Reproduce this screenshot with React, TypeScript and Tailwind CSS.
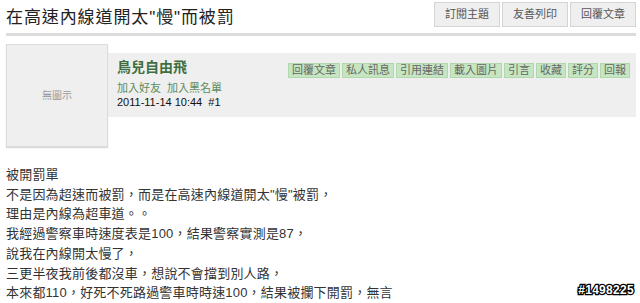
const FONT = { fontFamily: '"Liberation Sans", "Noto Sans CJK TC", sans-serif' };

const TOP_BTNS = ["訂閱主題", "友善列印", "回覆文章"];
const ACTIONS = ["回覆文章", "私人訊息", "引用連結", "載入圖片", "引言", "收藏", "評分", "回報"];

const LINES = [
  "被開罰單",
  "不是因為超速而被罰，而是在高速內線道開太\"慢\"被罰，",
  "理由是內線為超車道。。",
  "我經過警察車時速度表是100，結果警察實測是87，",
  "說我在內線開太慢了，",
  "三更半夜我前後都沒車，想說不會擋到別人路，",
  "本來都110，好死不死路過警車時時速100，結果被攔下開罰，無言",
];

export default function App() {
  return (
    <div className="relative w-[640px] h-[303px] overflow-hidden bg-white" style={FONT}>
      {/* header */}
      <div className="mx-[6px] mr-[4px] flex items-start justify-between border-b-[3px] border-[#dcdcdc] h-[36px]">
        <h1 className="pt-[9px] text-[17px] leading-[18px] tracking-[0.9px] text-[#222]">在高速內線道開太"慢"而被罰</h1>
        <div className="flex gap-[2px] pt-[2px]">
          {TOP_BTNS.map((b) => (
            <div key={b} className="h-[25px] px-[10px] flex items-center border border-[#d4d4d4] bg-[#efefef] text-[11px] text-[#555]">
              {b}
            </div>
          ))}
        </div>
      </div>

      {/* post head */}
      <div className="flex pl-[6px] pr-[4px] pt-[8px]">
        <div className="w-[102px] h-[103px] shrink-0 flex items-center justify-center bg-[#efefef] border border-[#dcdcdc] shadow-[0_1px_1px_rgba(0,0,0,0.15)] text-[10px] text-[#999]">
          無圖示
        </div>
        <div className="flex-1 mt-[9px] h-[64px] bg-[#efefef] flex justify-between pl-[9px] pr-[6px]">
          <div className="pt-[6px]">
            <div className="text-[14px] leading-[17px] font-bold text-[#3f6f3f]">鳥兒自由飛</div>
            <div className="mt-[6px] text-[11px] leading-[13px] text-[#5d8d5d]">加入好友&nbsp; 加入黑名單</div>
            <div className="mt-[1px] text-[11px] leading-[13px] text-[#111]">2011-11-14 10:44&nbsp; #1</div>
          </div>
          <div className="flex gap-[2px] pt-[10px] h-fit">
            {ACTIONS.map((a) => (
              <div key={a} className="h-[15px] px-[3px] flex items-center bg-[#c6e6c2] border border-[#b2d6ae] text-[11px] text-[#666]">
                {a}
              </div>
            ))}
          </div>
        </div>
      </div>

      {/* body */}
      <div className="px-[6px] pt-[18px] text-[13px] leading-[19.7px] tracking-[0.2px] text-[#333]">
        {LINES.map((l, i) => (
          <div key={i}>{l}</div>
        ))}
      </div>

      <div
        className="absolute right-[6px] bottom-[4px] text-[12px] font-bold text-white tracking-[0.3px]"
        style={{ WebkitTextStroke: "2.5px #000", paintOrder: "stroke fill" }}
      >
        #1498225
      </div>
    </div>
  );
}
